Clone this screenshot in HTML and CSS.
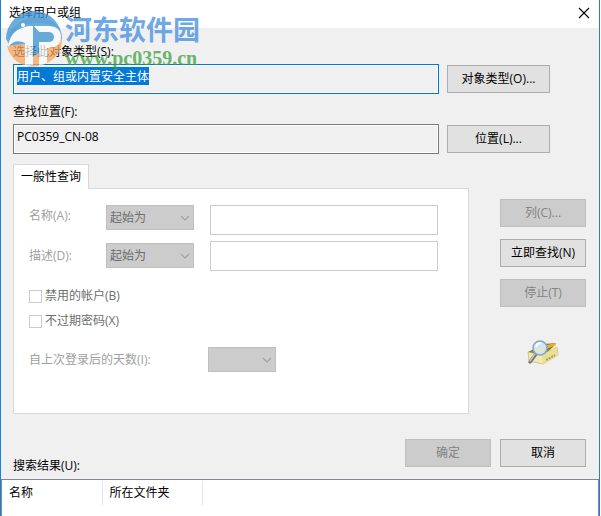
FILE: index.html
```html
<!DOCTYPE html>
<html lang="zh-CN">
<head>
<meta charset="utf-8">
<title>选择用户或组</title>
<link rel="stylesheet" href="styles.css">
</head>
<body>
<main class="dialog">
  <header class="titlebar">
    <h1 class="title">选择用户或组</h1>
    <button class="close" type="button" aria-label="关闭">
      <svg width="12" height="12" viewBox="0 0 12 12"><path d="M1 1l10 10M11 1L1 11" fill="none" stroke="#000" stroke-width="1.1"/></svg>
    </button>
  </header>

  <section class="fields">
    <label class="field-label" for="object-type">选择此对象类型(S):</label>
    <input class="readout readout-active" id="object-type" type="text" readonly value="用户、组或内置安全主体">
    <button class="btn" type="button">对象类型(O)...</button>
    <label class="field-label" for="location">查找位置(F):</label>
    <input class="readout" id="location" type="text" readonly value="PC0359_CN-08">
    <button class="btn" type="button">位置(L)...</button>
  </section>

  <section class="query">
    <div class="tabs">
      <button class="tab" type="button" role="tab" aria-selected="true">一般性查询</button>
      <div class="panel" role="tabpanel">
        <div class="row">
          <label class="row-label" for="name-op">名称(A):</label>
          <select class="combo" id="name-op" disabled><option>起始为</option></select>
          <input class="entry" type="text" aria-label="名称" disabled>
        </div>
        <div class="row">
          <label class="row-label" for="desc-op">描述(D):</label>
          <select class="combo" id="desc-op" disabled><option>起始为</option></select>
          <input class="entry" type="text" aria-label="描述" disabled>
        </div>
        <div class="checks">
          <label class="check"><input class="box" type="checkbox" disabled>禁用的帐户(B)</label>
          <label class="check"><input class="box" type="checkbox" disabled>不过期密码(X)</label>
        </div>
        <div class="days">
          <label class="days-label" for="days">自上次登录后的天数(I):</label>
          <select class="combo combo-days" id="days" disabled><option></option></select>
        </div>
      </div>
    </div>
    <div class="side">
      <button class="btn" type="button" disabled>列(C)...</button>
      <button class="btn" type="button">立即查找(N)</button>
      <button class="btn" type="button" disabled>停止(T)</button>
      <svg class="search-icon" width="34" height="28" viewBox="0 0 34 28">
        <path d="M2 13L18 5l12-1-3 4-11 10z" fill="#8a7733"/>
        <path d="M14 8l15-4 1 2-14 6z" fill="#e2b426"/>
        <path d="M2 13l14 3 15-8 1 8-15 9-14-3z" fill="#f1eaae" stroke="#c3b465" stroke-width=".7"/>
        <path d="M16 16l15-8 1 8-15 9z" fill="#e9e096"/>
        <path d="M20 21l9-5" stroke="#a99d5f" stroke-width="2" stroke-dasharray="2 1"/>
        <path d="M10 15l-6 8" stroke="#6d727b" stroke-width="3.4" stroke-linecap="round"/>
        <path d="M9 15l-5 7" stroke="#bfc4cc" stroke-width="1.4" stroke-linecap="round"/>
        <circle cx="14" cy="9" r="7" fill="#cde6f5" stroke="#8fa5bf" stroke-width="1.6"/>
        <path d="M9 10q5-2 10 1-4 5-10-1z" fill="#e6e6c0"/>
        <path d="M10 8q1-4 5-4" fill="none" stroke="#fff" stroke-width="2"/>
      </svg>
    </div>
  </section>

  <section class="actions">
    <h2 class="results-label" id="results">搜索结果(U):</h2>
    <button class="btn btn-action" type="button" disabled>确定</button>
    <button class="btn btn-action" type="button">取消</button>
  </section>

  <section class="results">
    <table class="list" aria-labelledby="results">
      <thead><tr><th class="col">名称</th><th class="col">所在文件夹</th><th class="col-rest"></th></tr></thead>
    </table>
  </section>

  <div class="watermark">
    <svg class="mark" width="58" height="58" viewBox="0 0 58 58">
      <path d="M1 29A28 28 0 0 1 57 29L50 38H6z" fill="#3a93d3"/>
      <path d="M2 36L17 34H42L57 29Q57 44 44 52 34 58 22 56 6 52 2 36z" fill="#f5a660"/>
      <path d="M23 24l6-8 9 10v14l-9 6h-3z" fill="#3a93d3"/>
      <path d="M3 37Q5 19 24 16h4v39l-8 1V33Q10 28 3 37z" fill="#f8fbfd"/>
      <path d="M29 16H44Q56 17 56 27T44 38H42V53l-8 3V32H43Q49 32 49 27T43 22H34z" fill="#f8fbfd"/>
      <path d="M7 19Q16 9 31 7 48 8 54 18 39 11 24 14 10 17 2 30z" fill="#2f86c9"/>
      <circle cx="18" cy="15" r="2" fill="#fff"/>
    </svg>
    <div class="mark-text">
      <span class="mark-name">河东软件园</span>
      <span class="mark-site">www.pc0359.cn</span>
    </div>
  </div>
</main>
<script src="select.js"></script>
</body>
</html>
```
FILE: styles.css
```css
* {
  box-sizing: border-box;
}

body {
  margin: 0;
  background: #fff;
  color: #000;
  font: 12px/18px "Open Sans", "Noto Sans CJK SC", sans-serif;
}

button,
input,
select {
  margin: 0;
  font: inherit;
  color: inherit;
}

.dialog {
  position: relative;
  display: flex;
  flex-direction: column;
  min-height: 100vh;
  margin-right: 1px;
  border: solid #1883d7;
  border-width: 0 1px;
  background: #f0f0f0;
}

.titlebar {
  display: flex;
  align-items: center;
  justify-content: space-between;
  height: 28px;
  padding: 0 9px 3px 8px;
  background: #fff;
}

.title,
.results-label {
  margin: 0;
  font-size: 12px;
  font-weight: 400;
}

.close {
  display: flex;
  padding: 0;
  border: 0;
  background: none;
}

.fields {
  display: grid;
  grid-template-columns: 1fr 103px;
  column-gap: 8px;
  align-items: center;
  padding: 6px 49px 0 12px;
}

.field-label {
  grid-column: 1 / -1;
  padding: 9px 0 3px;
}

.readout {
  width: 100%;
  height: 30px;
  padding: 2px 3px 8px;
  border: 1px solid #7a7a7a;
  box-shadow: inset 0 0 0 1px #fff;
  background: #f0f0f0;
  outline: 0;
}

.readout-active {
  border-color: #0078d7;
}

.readout::selection {
  background: rgba(0, 120, 215, 0.99);
  color: #fff;
}

.btn {
  height: 28px;
  padding: 0;
  border: 1px solid #adadad;
  background: #e1e1e1;
}

.btn:disabled {
  border-color: #bfbfbf;
  background: #ccc;
  color: #838383;
}

.query {
  display: flex;
  gap: 31px;
  padding: 10px 13px 0 12px;
}

.tabs {
  flex: 1;
}

.tab {
  position: relative;
  display: block;
  width: 76px;
  height: 25px;
  padding: 0;
  border: 1px solid #d9d9d9;
  border-bottom: 0;
  background: #fff;
}

.panel {
  height: 226px;
  margin-top: -1px;
  padding: 16px 30px 0 15px;
  border: 1px solid #d9d9d9;
  background: #fff;
  color: #a0a0a0;
}

.row {
  display: flex;
  align-items: flex-start;
  margin-bottom: 6px;
}

.row-label {
  width: 77px;
  padding-top: 2px;
}

.row + .row .combo {
  margin-top: 2px;
}

.row + .row .row-label {
  padding-top: 6px;
}

.combo {
  width: 88px;
  height: 25px;
  margin-right: 16px;
  padding: 0 3px;
  border: 1px solid #bfbfbf;
  border-radius: 0;
  appearance: none;
  background: #ccc url("data:image/svg+xml,%3Csvg xmlns='http://www.w3.org/2000/svg' width='10' height='6'%3E%3Cpath d='M1 1l4 4 4-4' fill='none' stroke='%23a0a0a0' stroke-width='1.1'/%3E%3C/svg%3E") no-repeat right 3px center;
  color: #6d6d6d;
  opacity: 1;
}

.entry {
  flex: 1;
  min-width: 0;
  height: 30px;
  border: 1px solid #ccc;
  background: #fff;
}

.checks {
  display: grid;
  gap: 7px;
  padding-top: 10px;
  color: #6d6d6d;
}

.check {
  display: flex;
  align-items: center;
  gap: 3px;
}

.box {
  width: 13px;
  height: 13px;
  border: 1px solid #ccc;
  appearance: none;
  background: #fff;
}

.days {
  display: flex;
  align-items: center;
  padding-top: 17px;
}

.days-label {
  width: 179px;
}

.combo-days {
  width: 68px;
}

.side {
  display: flex;
  flex-direction: column;
  gap: 12px;
  width: 86px;
  padding-top: 35px;
}

.search-icon {
  align-self: center;
  margin-top: 20px;
}

.actions {
  display: flex;
  gap: 9px;
  padding: 25px 13px 12px 12px;
}

.results-label {
  flex: 1;
  padding-top: 18px;
  margin-bottom: -8px;
}

.btn-action {
  width: 86px;
}

.results {
  flex: 1;
  border: 1px solid #828790;
  border-bottom: 0;
  background: #fff;
}

.list {
  width: 100%;
  margin-top: 1px;
  border-collapse: collapse;
  table-layout: fixed;
}

.list th {
  height: 24px;
  padding: 0 7px;
  font-weight: 400;
  text-align: left;
}

.list .col {
  width: 100px;
  border-right: 1px solid #e5e5e5;
}

.watermark {
  position: absolute;
  top: 10px;
  left: 4px;
  display: flex;
  gap: 2px;
  pointer-events: none;
  opacity: 0.75;
}

.mark-text {
  display: flex;
  flex-direction: column;
  font-weight: 700;
}

.mark-name {
  font-family: "Noto Sans CJK SC", sans-serif;
  font-size: 27px;
  line-height: 38px;
  color: #3f8de0;
}

.mark-site {
  font-family: "Liberation Serif", serif;
  font-size: 20px;
  line-height: 20px;
  color: #3ba03b;
}
```
FILE: select.js
```js
const field = document.getElementById("object-type");
field.focus();
field.select();
```
